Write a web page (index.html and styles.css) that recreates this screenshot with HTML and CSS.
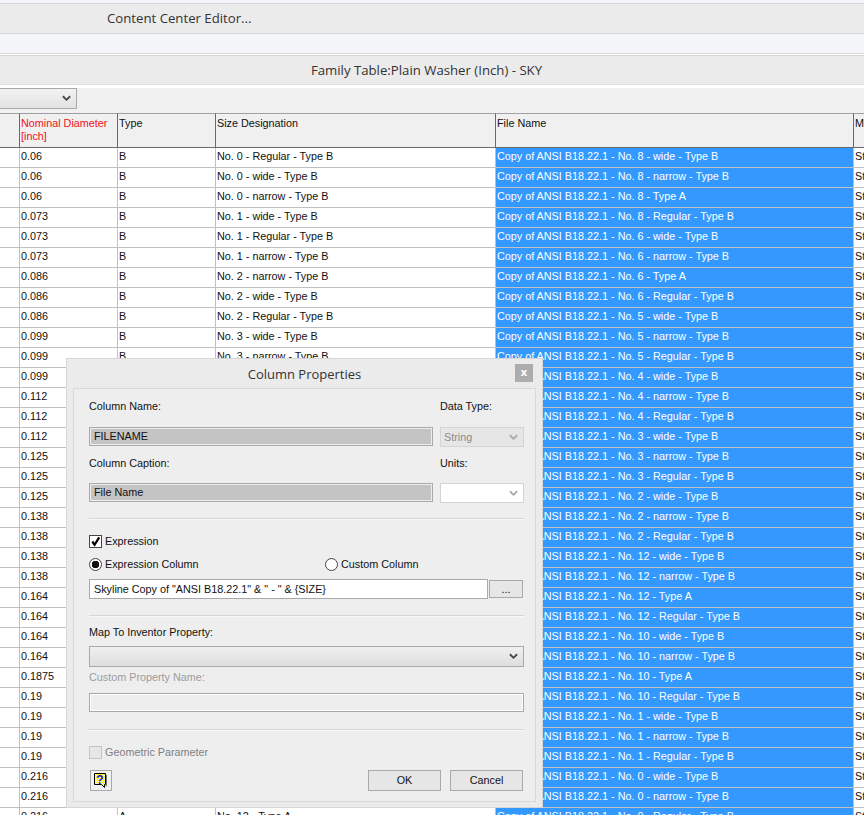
FILE: index.html
```html
<!DOCTYPE html>
<html lang="en">
<head>
  <meta charset="UTF-8" />
  <title>Family Table</title>
  <link rel="stylesheet" href="styles.css">
</head>
<body>
  <div class="top-strip"></div>
  <div class="title-bar editor-bar"><span class="editor-title">Content Center Editor...</span></div>
  <div class="blank-strip"></div>
  <div class="title-bar family-bar">Family Table:Plain Washer (Inch) - SKY</div>
  <div class="toolbar">
    <div class="view-select"><svg class="chevron" viewBox="0 0 10 7"><path d="M1 1l4 4 4-4" /></svg></div>
  </div>

  <table class="family-table">
    <colgroup>
      <col class="c-key"><col class="c-dia"><col class="c-type"><col class="c-size"><col class="c-file"><col class="c-more">
    </colgroup>
    <thead>
      <tr>
        <th></th>
        <th class="key-col">Nominal Diameter<br>[inch]</th>
        <th>Type</th>
        <th>Size Designation</th>
        <th>File Name</th>
        <th>M</th>
      </tr>
    </thead>
    <tbody>
      <tr><td></td><td>0.06</td><td>B</td><td>No. 0 - Regular - Type B</td><td class="sel">Copy of ANSI B18.22.1 - No. 8 - wide - Type B</td><td>St</td></tr>
      <tr><td></td><td>0.06</td><td>B</td><td>No. 0 - wide - Type B</td><td class="sel">Copy of ANSI B18.22.1 - No. 8 - narrow - Type B</td><td>St</td></tr>
      <tr><td></td><td>0.06</td><td>B</td><td>No. 0 - narrow - Type B</td><td class="sel">Copy of ANSI B18.22.1 - No. 8 - Type A</td><td>St</td></tr>
      <tr><td></td><td>0.073</td><td>B</td><td>No. 1 - wide - Type B</td><td class="sel">Copy of ANSI B18.22.1 - No. 8 - Regular - Type B</td><td>St</td></tr>
      <tr><td></td><td>0.073</td><td>B</td><td>No. 1 - Regular - Type B</td><td class="sel">Copy of ANSI B18.22.1 - No. 6 - wide - Type B</td><td>St</td></tr>
      <tr><td></td><td>0.073</td><td>B</td><td>No. 1 - narrow - Type B</td><td class="sel">Copy of ANSI B18.22.1 - No. 6 - narrow - Type B</td><td>St</td></tr>
      <tr><td></td><td>0.086</td><td>B</td><td>No. 2 - narrow - Type B</td><td class="sel">Copy of ANSI B18.22.1 - No. 6 - Type A</td><td>St</td></tr>
      <tr><td></td><td>0.086</td><td>B</td><td>No. 2 - wide - Type B</td><td class="sel">Copy of ANSI B18.22.1 - No. 6 - Regular - Type B</td><td>St</td></tr>
      <tr><td></td><td>0.086</td><td>B</td><td>No. 2 - Regular - Type B</td><td class="sel">Copy of ANSI B18.22.1 - No. 5 - wide - Type B</td><td>St</td></tr>
      <tr><td></td><td>0.099</td><td>B</td><td>No. 3 - wide - Type B</td><td class="sel">Copy of ANSI B18.22.1 - No. 5 - narrow - Type B</td><td>St</td></tr>
      <tr><td></td><td>0.099</td><td>B</td><td>No. 3 - narrow - Type B</td><td class="sel">Copy of ANSI B18.22.1 - No. 5 - Regular - Type B</td><td>St</td></tr>
      <tr><td></td><td>0.099</td><td>B</td><td>No. 3 - Regular - Type B</td><td class="sel">Copy of ANSI B18.22.1 - No. 4 - wide - Type B</td><td>St</td></tr>
      <tr><td></td><td>0.112</td><td>B</td><td>No. 4 - wide - Type B</td><td class="sel">Copy of ANSI B18.22.1 - No. 4 - narrow - Type B</td><td>St</td></tr>
      <tr><td></td><td>0.112</td><td>B</td><td>No. 4 - narrow - Type B</td><td class="sel">Copy of ANSI B18.22.1 - No. 4 - Regular - Type B</td><td>St</td></tr>
      <tr><td></td><td>0.112</td><td>B</td><td>No. 4 - Regular - Type B</td><td class="sel">Copy of ANSI B18.22.1 - No. 3 - wide - Type B</td><td>St</td></tr>
      <tr><td></td><td>0.125</td><td>B</td><td>No. 5 - wide - Type B</td><td class="sel">Copy of ANSI B18.22.1 - No. 3 - narrow - Type B</td><td>St</td></tr>
      <tr><td></td><td>0.125</td><td>B</td><td>No. 5 - narrow - Type B</td><td class="sel">Copy of ANSI B18.22.1 - No. 3 - Regular - Type B</td><td>St</td></tr>
      <tr><td></td><td>0.125</td><td>B</td><td>No. 5 - Regular - Type B</td><td class="sel">Copy of ANSI B18.22.1 - No. 2 - wide - Type B</td><td>St</td></tr>
      <tr><td></td><td>0.138</td><td>B</td><td>No. 6 - wide - Type B</td><td class="sel">Copy of ANSI B18.22.1 - No. 2 - narrow - Type B</td><td>St</td></tr>
      <tr><td></td><td>0.138</td><td>B</td><td>No. 6 - narrow - Type B</td><td class="sel">Copy of ANSI B18.22.1 - No. 2 - Regular - Type B</td><td>St</td></tr>
      <tr><td></td><td>0.138</td><td>A</td><td>No. 6 - Type A</td><td class="sel">Copy of ANSI B18.22.1 - No. 12 - wide - Type B</td><td>St</td></tr>
      <tr><td></td><td>0.138</td><td>B</td><td>No. 6 - Regular - Type B</td><td class="sel">Copy of ANSI B18.22.1 - No. 12 - narrow - Type B</td><td>St</td></tr>
      <tr><td></td><td>0.164</td><td>B</td><td>No. 8 - wide - Type B</td><td class="sel">Copy of ANSI B18.22.1 - No. 12 - Type A</td><td>St</td></tr>
      <tr><td></td><td>0.164</td><td>B</td><td>No. 8 - narrow - Type B</td><td class="sel">Copy of ANSI B18.22.1 - No. 12 - Regular - Type B</td><td>St</td></tr>
      <tr><td></td><td>0.164</td><td>A</td><td>No. 8 - Type A</td><td class="sel">Copy of ANSI B18.22.1 - No. 10 - wide - Type B</td><td>St</td></tr>
      <tr><td></td><td>0.164</td><td>B</td><td>No. 8 - Regular - Type B</td><td class="sel">Copy of ANSI B18.22.1 - No. 10 - narrow - Type B</td><td>St</td></tr>
      <tr><td></td><td>0.1875</td><td>B</td><td>No. 10 - wide - Type B</td><td class="sel">Copy of ANSI B18.22.1 - No. 10 - Type A</td><td>St</td></tr>
      <tr><td></td><td>0.19</td><td>B</td><td>No. 10 - narrow - Type B</td><td class="sel">Copy of ANSI B18.22.1 - No. 10 - Regular - Type B</td><td>St</td></tr>
      <tr><td></td><td>0.19</td><td>A</td><td>No. 10 - Type A</td><td class="sel">Copy of ANSI B18.22.1 - No. 1 - wide - Type B</td><td>St</td></tr>
      <tr><td></td><td>0.19</td><td>B</td><td>No. 10 - Regular - Type B</td><td class="sel">Copy of ANSI B18.22.1 - No. 1 - narrow - Type B</td><td>St</td></tr>
      <tr><td></td><td>0.19</td><td>B</td><td>No. 12 - wide - Type B</td><td class="sel">Copy of ANSI B18.22.1 - No. 1 - Regular - Type B</td><td>St</td></tr>
      <tr><td></td><td>0.216</td><td>B</td><td>No. 12 - narrow - Type B</td><td class="sel">Copy of ANSI B18.22.1 - No. 0 - wide - Type B</td><td>St</td></tr>
      <tr><td></td><td>0.216</td><td>B</td><td>No. 12 - Regular - Type B</td><td class="sel">Copy of ANSI B18.22.1 - No. 0 - narrow - Type B</td><td>St</td></tr>
      <tr><td></td><td>0.216</td><td>A</td><td>No. 12 - Type A</td><td class="sel">Copy of ANSI B18.22.1 - No. 0 - Regular - Type B</td><td>St</td></tr>
    </tbody>
  </table>

  <div class="dialog">
    <div class="dialog-head">
      <span class="dialog-title">Column Properties</span>
      <span class="close-btn">x</span>
    </div>
    <div class="dialog-body">
      <div class="name-grid">
        <label class="lbl">Column Name:</label>
        <label class="lbl">Data Type:</label>
        <div class="field field-grey">FILENAME</div>
        <div class="combo combo-off">String<svg class="chevron faint" viewBox="0 0 10 7"><path d="M1 1l4 4 4-4" /></svg></div>
        <label class="lbl">Column Caption:</label>
        <label class="lbl">Units:</label>
        <div class="field field-grey">File Name</div>
        <div class="combo combo-white"><svg class="chevron faint" viewBox="0 0 10 7"><path d="M1 1l4 4 4-4" /></svg></div>
      </div>
      <div class="rule rule-first"></div>
      <div class="check-row">
        <span class="box"><svg viewBox="0 0 12 12"><path d="M2.5 6l2.5 3.5 5-8" /></svg></span>
        <span>Expression</span>
      </div>
      <div class="radio-row">
        <div class="radio-item"><span class="radio on"></span><span>Expression Column</span></div>
        <div class="radio-item"><span class="radio"></span><span>Custom Column</span></div>
      </div>
      <div class="expr-row">
        <div class="field field-white">Skyline Copy of "ANSI B18.22.1" &amp; " - " &amp; {SIZE}</div>
        <div class="dots-btn">...</div>
      </div>
      <div class="rule rule-second"></div>
      <label class="lbl map-lbl">Map To Inventor Property:</label>
      <div class="combo combo-grad"><svg class="chevron" viewBox="0 0 10 7"><path d="M1 1l4 4 4-4" /></svg></div>
      <label class="lbl lbl-off">Custom Property Name:</label>
      <div class="field field-off"></div>
      <div class="rule rule-third"></div>
      <div class="check-row check-off">
        <span class="box box-off"></span>
        <span>Geometric Parameter</span>
      </div>
      <div class="foot">
        <div class="help-btn">
          <svg viewBox="0 0 18 18" width="18" height="18">
            <defs>
              <pattern id="dither" width="2" height="2" patternUnits="userSpaceOnUse">
                <rect width="2" height="2" fill="#fff" />
                <rect width="1" height="1" fill="#f5e400" />
                <rect x="1" y="1" width="1" height="1" fill="#f5e400" />
              </pattern>
            </defs>
            <path d="M2.5 1.5h11v11h-1v3l-3-3h-7z" fill="url(#dither)" stroke="#000" />
            <path d="M14.5 3v11h-1" fill="none" stroke="#777" />
            <text x="8" y="11.5" class="help-mark">?</text>
          </svg>
        </div>
        <div class="foot-btns">
          <div class="push-btn">OK</div>
          <div class="push-btn">Cancel</div>
        </div>
      </div>
    </div>
  </div>
</body>
</html>
```

FILE: styles.css
```css
html, body {
  height: 815px;
  overflow: hidden;
}
body {
  margin: 0;
  padding: 0;
  position: relative;
  font-family: 'Liberation Sans', sans-serif;
  font-size: 10.8px;
  color: #111;
  background-color: #fff;
}
.top-strip {
  height: 3px;
  background-color: #f4f5f8;
}
.title-bar {
  background-color: #ebebeb;
  font-family: 'Open Sans', sans-serif;
  font-size: 13.2px;
  color: #333;
}
.editor-bar {
  height: 29px;
  line-height: 29px;
  padding-left: 107px;
  border-top: 1px solid #d6d6d6;
  border-bottom: 1px solid #d6d6d6;
}
.blank-strip {
  height: 19px;
  background-color: #f4f5f8;
  border-bottom: 1px solid #d6d6d6;
}
.family-bar {
  height: 28px;
  line-height: 28px;
  margin-top: 1px;
  padding-right: 11px;
  text-align: center;
  border-top: 1px solid #d6d6d6;
  border-bottom: 1px solid #e0e0e0;
}
.toolbar {
  height: 25px;
  margin-top: 3px;
  background-color: #f0f0f0;
}
.view-select {
  width: 76px;
  height: 19px;
  border: 1px solid #a9a9a9;
  border-left: none;
  background: linear-gradient(#f2f2f2, #e2e2e2);
  display: flex;
  align-items: center;
  justify-content: flex-end;
}
.chevron {
  width: 9px;
  height: 7px;
  margin-right: 5px;
  flex: none;
}
.chevron path {
  fill: none;
  stroke: #444;
  stroke-width: 2;
}
.chevron.faint path {
  stroke: #a8a8a8;
}

.family-table {
  border-collapse: separate;
  border-spacing: 0;
  table-layout: fixed;
  width: 864px;
}
.c-key { width: 20px; }
.c-dia { width: 98px; }
.c-type { width: 98px; }
.c-size { width: 280px; }
.c-file { width: 358px; }
.c-more { width: 10px; }
.family-table th {
  height: 30px;
  padding: 3px 0 0 1px;
  background-color: #f0f0f0;
  border-top: 1px solid #a0a0a0;
  border-bottom: 1px solid #696969;
  border-right: 1px solid #696969;
  font-weight: normal;
  text-align: left;
  vertical-align: top;
  line-height: 13px;
  white-space: nowrap;
  overflow: hidden;
}
.family-table th.key-col {
  color: #f01020;
}
.family-table td {
  height: 19px;
  padding: 0 0 0 1px;
  border-bottom: 1px solid #c0c0c0;
  border-right: 1px solid #c0c0c0;
  white-space: nowrap;
  overflow: hidden;
  vertical-align: top;
  line-height: 16px;
}
.family-table td.sel {
  background-color: #3399ff;
  color: #fff;
}
.family-table th:last-child, .family-table td:last-child {
  border-right: none;
}

.dialog {
  position: absolute;
  left: 66px;
  top: 358px;
  width: 463px;
  height: 448px;
  background-color: #ebebeb;
  border: 1px solid #d6d6d6;
  padding: 0 6px;
}
.dialog-head {
  height: 29px;
  display: flex;
  align-items: center;
  justify-content: center;
  position: relative;
  font-family: 'Open Sans', sans-serif;
  font-size: 13px;
  color: #333;
}
.close-btn {
  position: absolute;
  right: 3px;
  top: 5px;
  width: 18px;
  height: 18px;
  background-color: #adadad;
  color: #fff;
  font-size: 11px;
  font-weight: bold;
  text-align: center;
  line-height: 16px;
}
.dialog-body {
  height: 414px;
  background-color: #eee;
  border: 1px solid #d8d8d8;
  padding: 10px 12px 0 15px;
  box-sizing: border-box;
}
.name-grid {
  display: grid;
  grid-template-columns: 344px 84px;
  grid-template-rows: 28px 29px 27px 20px;
  column-gap: 7px;
  align-items: start;
}
.lbl {
  display: block;
  line-height: 15px;
}
.lbl-off {
  color: #9c9c9c;
  margin-top: 3px;
}
.map-lbl {
  margin-top: 8px;
}
.field {
  box-sizing: border-box;
  height: 19px;
  line-height: 16px;
  padding-left: 4px;
  border: 1px solid #a9a9a9;
  white-space: nowrap;
}
.field-grey {
  background-color: #c4c4c4;
  box-shadow: inset 0 0 0 1px #eee;
}
.field-white {
  background-color: #fff;
  flex: 1;
  height: 20px;
  line-height: 18px;
}
.field-off {
  margin-top: 8px;
  background-color: #eee;
  box-shadow: inset 0 0 0 1px #fff;
  width: 435px;
}
.combo {
  box-sizing: border-box;
  height: 20px;
  display: flex;
  align-items: center;
  justify-content: space-between;
  padding-left: 3px;
  border: 1px solid #d4d4d4;
}
.combo-off {
  color: #8c8c8c;
  background-color: #e6e6e6;
}
.combo-white {
  background-color: #fff;
  justify-content: flex-end;
}
.combo-grad {
  width: 435px;
  height: 21px;
  margin-top: 6px;
  justify-content: flex-end;
  border-color: #a9a9a9;
  background: linear-gradient(#f0f0f0, #dedede);
}
.rule {
  width: 435px;
  height: 0;
  border-top: 1px solid #d6d6d6;
  border-bottom: 1px solid #f8f8f8;
}
.rule-first { margin-top: 15px; }
.rule-second { margin-top: 16px; }
.rule-third { margin-top: 17px; }
.check-row {
  display: flex;
  align-items: center;
  gap: 3px;
  height: 14px;
}
.rule-first + .check-row { margin-top: 14px; }
.rule-third + .check-row { margin-top: 14px; }
.check-off {
  color: #7f7f7f;
}
.box {
  width: 11px;
  height: 11px;
  border: 1px solid #444;
  background-color: #fff;
  flex: none;
}
.box svg {
  display: block;
  width: 11px;
  height: 11px;
}
.box path {
  fill: none;
  stroke: #000;
  stroke-width: 2.4;
}
.box-off {
  border-color: #c4c4c4;
  background-color: #e6e6e6;
}
.radio-row {
  display: flex;
  margin-top: 8px;
  height: 16px;
  align-items: center;
}
.radio-item {
  display: flex;
  align-items: center;
  gap: 3px;
  width: 236px;
  flex: none;
}
.radio {
  box-sizing: border-box;
  width: 13px;
  height: 13px;
  border: 1px solid #444;
  border-radius: 50%;
  background-color: #fff;
  flex: none;
}
.radio.on {
  background: radial-gradient(circle, #111 0 3.5px, #fff 4px);
}
.expr-row {
  display: flex;
  gap: 1px;
  margin-top: 7px;
  width: 434px;
  align-items: center;
}
.dots-btn {
  box-sizing: border-box;
  width: 34px;
  height: 18px;
  border: 1px solid #a9a9a9;
  background-color: #e6e6e6;
  text-align: center;
  line-height: 16px;
}
.foot {
  display: flex;
  justify-content: space-between;
  align-items: center;
  width: 434px;
  margin-top: 11px;
  padding-left: 1px;
  box-sizing: border-box;
}
.help-btn {
  box-sizing: border-box;
  width: 22px;
  height: 21px;
  border: 1px solid #a9a9a9;
  background-color: #f0f0f0;
  display: flex;
  align-items: center;
  justify-content: center;
}
.help-mark {
  fill: #1a1ab0;
  font-family: 'Liberation Sans', sans-serif;
  font-size: 12px;
  font-weight: bold;
  text-anchor: middle;
}
.foot-btns {
  display: flex;
  gap: 9px;
}
.push-btn {
  box-sizing: border-box;
  width: 73px;
  height: 21px;
  border: 1px solid #a9a9a9;
  background-color: #e6e6e6;
  text-align: center;
  line-height: 19px;
}
```
